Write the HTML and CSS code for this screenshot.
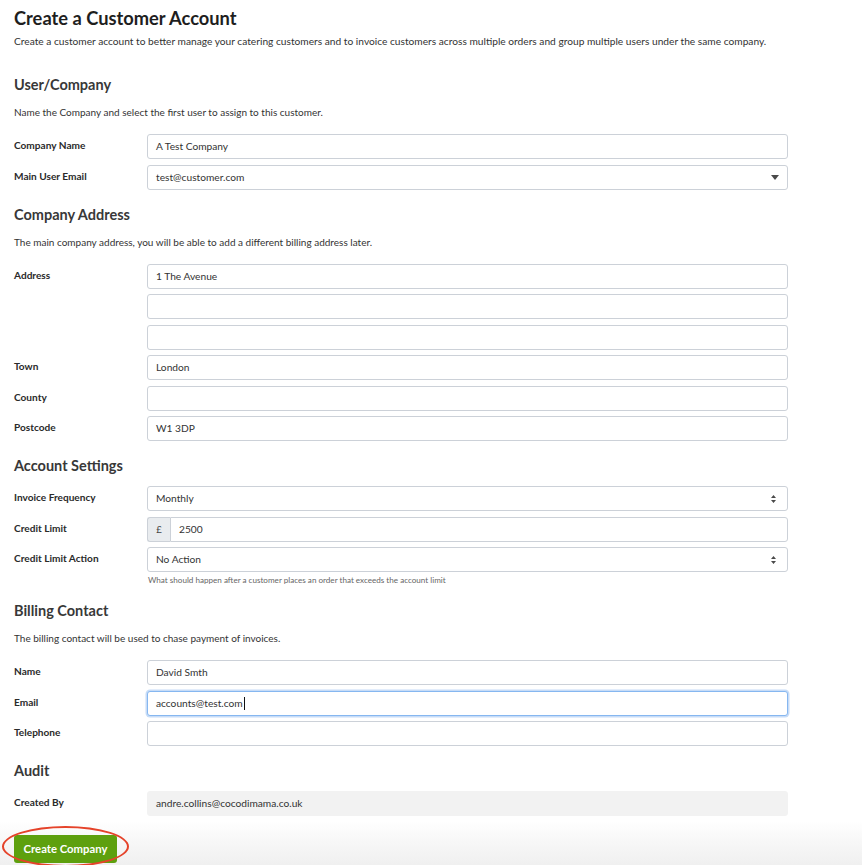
FILE: index.html
```html
<!DOCTYPE html>
<html lang="en">
<head>
<meta charset="utf-8">
<title>Create a Customer Account</title>
<link rel="stylesheet" href="styles.css">
</head>
<body>
<main class="page">
  <h1 class="title">Create a Customer Account</h1>
  <p class="lead">Create a customer account to better manage your catering customers and to invoice customers across multiple orders and group multiple users under the same company.</p>

  <h2 class="section">User/Company</h2>
  <p class="desc">Name the Company and select the first user to assign to this customer.</p>
  <div class="rows">
    <div class="row"><label class="lbl">Company Name</label><div class="ctl"><div class="input">A Test Company</div></div></div>
    <div class="row"><label class="lbl">Main User Email</label><div class="ctl"><div class="input select">test@customer.com<svg class="caret" width="8" height="5" viewBox="0 0 8 5"><path d="M0 0h8L4 5z" fill="#4a4a4a"/></svg></div></div></div>
  </div>

  <h2 class="section">Company Address</h2>
  <p class="desc">The main company address, you will be able to add a different billing address later.</p>
  <div class="rows">
    <div class="row"><label class="lbl">Address</label><div class="ctl stack"><div class="input">1 The Avenue</div><div class="input"></div><div class="input"></div></div></div>
    <div class="row"><label class="lbl">Town</label><div class="ctl"><div class="input">London</div></div></div>
    <div class="row"><label class="lbl">County</label><div class="ctl"><div class="input"></div></div></div>
    <div class="row"><label class="lbl">Postcode</label><div class="ctl"><div class="input">W1 3DP</div></div></div>
  </div>

  <h2 class="section">Account Settings</h2>
  <div class="rows nodesc">
    <div class="row"><label class="lbl">Invoice Frequency</label><div class="ctl"><div class="input select">Monthly<svg class="updown" width="5" height="8" viewBox="0 0 5 8"><path d="M0 3L2.5 0L5 3z M0 5h5L2.5 8z" fill="#4a4a4a"/></svg></div></div></div>
    <div class="row"><label class="lbl">Credit Limit</label><div class="ctl"><div class="group"><span class="addon">£</span><div class="input grouped">2500</div></div></div></div>
    <div class="row"><label class="lbl">Credit Limit Action</label><div class="ctl"><div class="input select">No Action<svg class="updown" width="5" height="8" viewBox="0 0 5 8"><path d="M0 3L2.5 0L5 3z M0 5h5L2.5 8z" fill="#4a4a4a"/></svg></div><p class="help">What should happen after a customer places an order that exceeds the account limit</p></div></div>
  </div>

  <h2 class="section">Billing Contact</h2>
  <p class="desc">The billing contact will be used to chase payment of invoices.</p>
  <div class="rows">
    <div class="row"><label class="lbl">Name</label><div class="ctl"><div class="input">David Smth</div></div></div>
    <div class="row"><label class="lbl">Email</label><div class="ctl"><div class="input focus">accounts@test.com<span class="cursor"></span></div></div></div>
    <div class="row"><label class="lbl">Telephone</label><div class="ctl"><div class="input"></div></div></div>
  </div>

  <h2 class="section">Audit</h2>
  <div class="rows nodesc">
    <div class="row"><label class="lbl">Created By</label><div class="ctl"><div class="input readonly">andre.collins@cocodimama.co.uk</div></div></div>
  </div>
</main>
<footer class="footer">
  <div class="btn-wrap">
    <button class="btn">Create Company</button>
    <span class="ring"></span>
  </div>
</footer>
</body>
</html>
```
FILE: styles.css
```css
* { box-sizing: border-box; }
html, body { margin: 0; padding: 0; background: #fff; }
body {
  font-family: "Source Sans Pro", Lato, "Noto Sans", sans-serif;
  color: #333;
  width: 862px;
  height: 865px;
  overflow: hidden;
}
.page {
  padding: 6px 74px 0 14px;
}
.title {
  margin: 0;
  font-size: 18.3px;
  line-height: 24px;
  font-weight: 700;
  color: #1e1e1e;
}
.lead {
  margin: 3px 0 0;
  font-size: 10.2px;
  line-height: 16px;
  color: #333;
  white-space: nowrap;
}
.section {
  margin: 26px 0 0;
  font-size: 14.5px;
  line-height: 20px;
  font-weight: 700;
  color: #383838;
}
.lead + .section { margin-top: 26px; }
.rows + .section { margin-top: 15px; }
.desc {
  margin: 9px 0 0;
  font-size: 10px;
  line-height: 16px;
  color: #333;
}
.rows {
  margin-top: 14px;
  display: flex;
  flex-direction: column;
  gap: 5.5px;
}
.rows.nodesc { margin-top: 10px; }
.row {
  display: flex;
  align-items: flex-start;
}
.lbl {
  width: 133px;
  flex: none;
  font-size: 10.1px;
  line-height: 22px;
  font-weight: 700;
  color: #2a2a2a;
}
.ctl {
  flex: 1;
  min-width: 0;
}
.stack {
  display: flex;
  flex-direction: column;
  gap: 5.5px;
}
.input {
  position: relative;
  height: 25px;
  border: 1px solid #ccd1d8;
  border-radius: 3px;
  background: #fff;
  padding: 0 8px;
  font-size: 10.2px;
  line-height: 23px;
  color: #333;
  display: flex;
  align-items: center;
}
.select { justify-content: space-between; padding-right: 8px; }
.caret { margin-right: 0; }
.updown { margin-right: 3px; }
.group { display: flex; }
.addon {
  width: 23px;
  height: 25px;
  flex: none;
  border: 1px solid #ccd1d8;
  border-right: none;
  border-radius: 3px 0 0 3px;
  background: #e9ecef;
  font-size: 9.5px;
  line-height: 23px;
  text-align: center;
  color: #444;
}
.grouped { flex: 1; border-radius: 0 3px 3px 0; }
.help {
  margin: 2px 0 0 1px;
  font-size: 8.1px;
  line-height: 12px;
  color: #666;
}
.focus {
  border-color: #86b7f0;
  box-shadow: 0 0 0 1.5px #c7dcf7;
}
.cursor {
  display: inline-block;
  width: 1px;
  height: 13px;
  background: #111;
  margin-left: 1px;
}
.readonly {
  border-color: #f2f2f2;
  background: #f2f2f2;
}
.footer {
  margin-top: 5px;
  height: 60px;
  padding: 14px 0 0 14px;
  background: linear-gradient(to bottom, #ffffff 0%, #f6f6f6 40%, #ebebeb 100%);
}
.btn-wrap {
  position: relative;
  display: inline-block;
}
.btn {
  display: block;
  height: 28px;
  padding: 0 8px;
  border: none;
  border-radius: 3px;
  background: #5ea00e;
  color: #fff;
  font-family: inherit;
  font-size: 11.3px;
  font-weight: 700;
  line-height: 28px;
  width: 103px;
}
.ring {
  position: absolute;
  left: -12px;
  top: -9px;
  width: 127px;
  height: 41px;
  border: 2px solid #e5432a;
  border-radius: 50%;
  pointer-events: none;
}
```
